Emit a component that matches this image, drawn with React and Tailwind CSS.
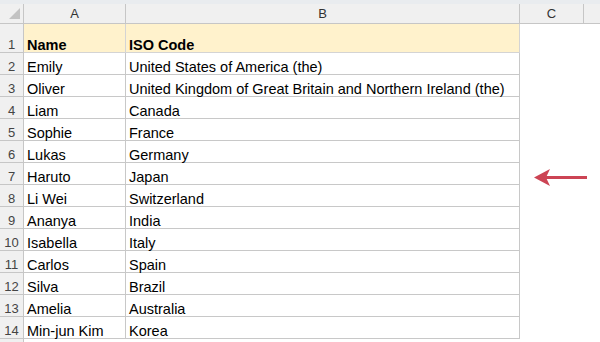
import React from "react";

const rows = [
  ["Emily", "United States of America (the)"],
  ["Oliver", "United Kingdom of Great Britain and Northern Ireland (the)"],
  ["Liam", "Canada"],
  ["Sophie", "France"],
  ["Lukas", "Germany"],
  ["Haruto", "Japan"],
  ["Li Wei", "Switzerland"],
  ["Ananya", "India"],
  ["Isabella", "Italy"],
  ["Carlos", "Spain"],
  ["Silva", "Brazil"],
  ["Amelia", "Australia"],
  ["Min-jun Kim", "Korea"],
];

const font = { fontFamily: '"Liberation Sans", Arial, sans-serif' };

const App = () => {
  return (
    <div
      className="relative w-[600px] h-[342px] overflow-hidden bg-white text-[14.5px] text-black"
      style={font}
    >
      <div className="h-[4px] bg-[#e9ecef]" />

      {/* column headers */}
      <div className="flex h-[20px] bg-[#f0f0f0] border-b border-[#c6c6c6] text-[13px] text-[#333]">
        <div className="relative w-[24px] border-r border-[#c6c6c6]">
          <svg className="absolute left-[9px] top-[4px]" width="11" height="11" viewBox="0 0 11 11">
            <polygon points="11,0 11,11 0,11" fill="#c3c3c3" />
          </svg>
        </div>
        <div className="w-[102px] flex items-center justify-center border-r border-[#c6c6c6]">A</div>
        <div className="w-[394px] flex items-center justify-center border-r border-[#c6c6c6]">B</div>
        <div className="w-[64px] flex items-center justify-center border-r border-[#c6c6c6]">C</div>
        <div className="flex-1" />
      </div>

      {/* header row 1 */}
      <div className="flex h-[29px] leading-none">
        <div className="w-[24px] flex items-end justify-center pb-[1px] bg-[#f0f0f0] border-r border-b border-[#c6c6c6] text-[13px] text-[#444]">
          1
        </div>
        <div className="w-[102px] flex items-end pl-[3px] bg-[#fff2cc] border-r border-b border-[#d4d4d4] font-bold">
          Name
        </div>
        <div className="w-[394px] flex items-end pl-[3px] bg-[#fff2cc] border-r border-b border-[#d4d4d4] font-bold">
          ISO Code
        </div>
        <div className="flex-1" />
      </div>

      {rows.map(([name, code], i) => (
        <div key={i} className="flex h-[22px] leading-none">
          <div className="w-[24px] flex items-end justify-center pb-[1px] bg-[#f0f0f0] border-r border-b border-[#c6c6c6] text-[13px] text-[#444]">
            {i + 2}
          </div>
          <div className="w-[102px] flex items-end pl-[3px] border-r border-b border-[#c8c8c8] whitespace-nowrap">
            {name}
          </div>
          <div className="w-[394px] flex items-end pl-[3px] border-r border-b border-[#c8c8c8] whitespace-nowrap">
            {code}
          </div>
          <div className="flex-1" />
        </div>
      ))}

      <div className="flex h-[10px]">
        <div className="w-[24px] bg-[#f0f0f0] border-r border-[#c6c6c6]" />
      </div>

      {/* pointer arrow */}
      <svg className="absolute left-[533px] top-[168px]" width="56" height="20" viewBox="0 0 56 20">
        <line x1="12" y1="9.5" x2="54" y2="9.5" stroke="#cc4454" strokeWidth="3" />
        <polygon points="1,9.5 17,1 13,9.5 17,18" fill="#cc4454" />
      </svg>
    </div>
  );
};

export default App;
